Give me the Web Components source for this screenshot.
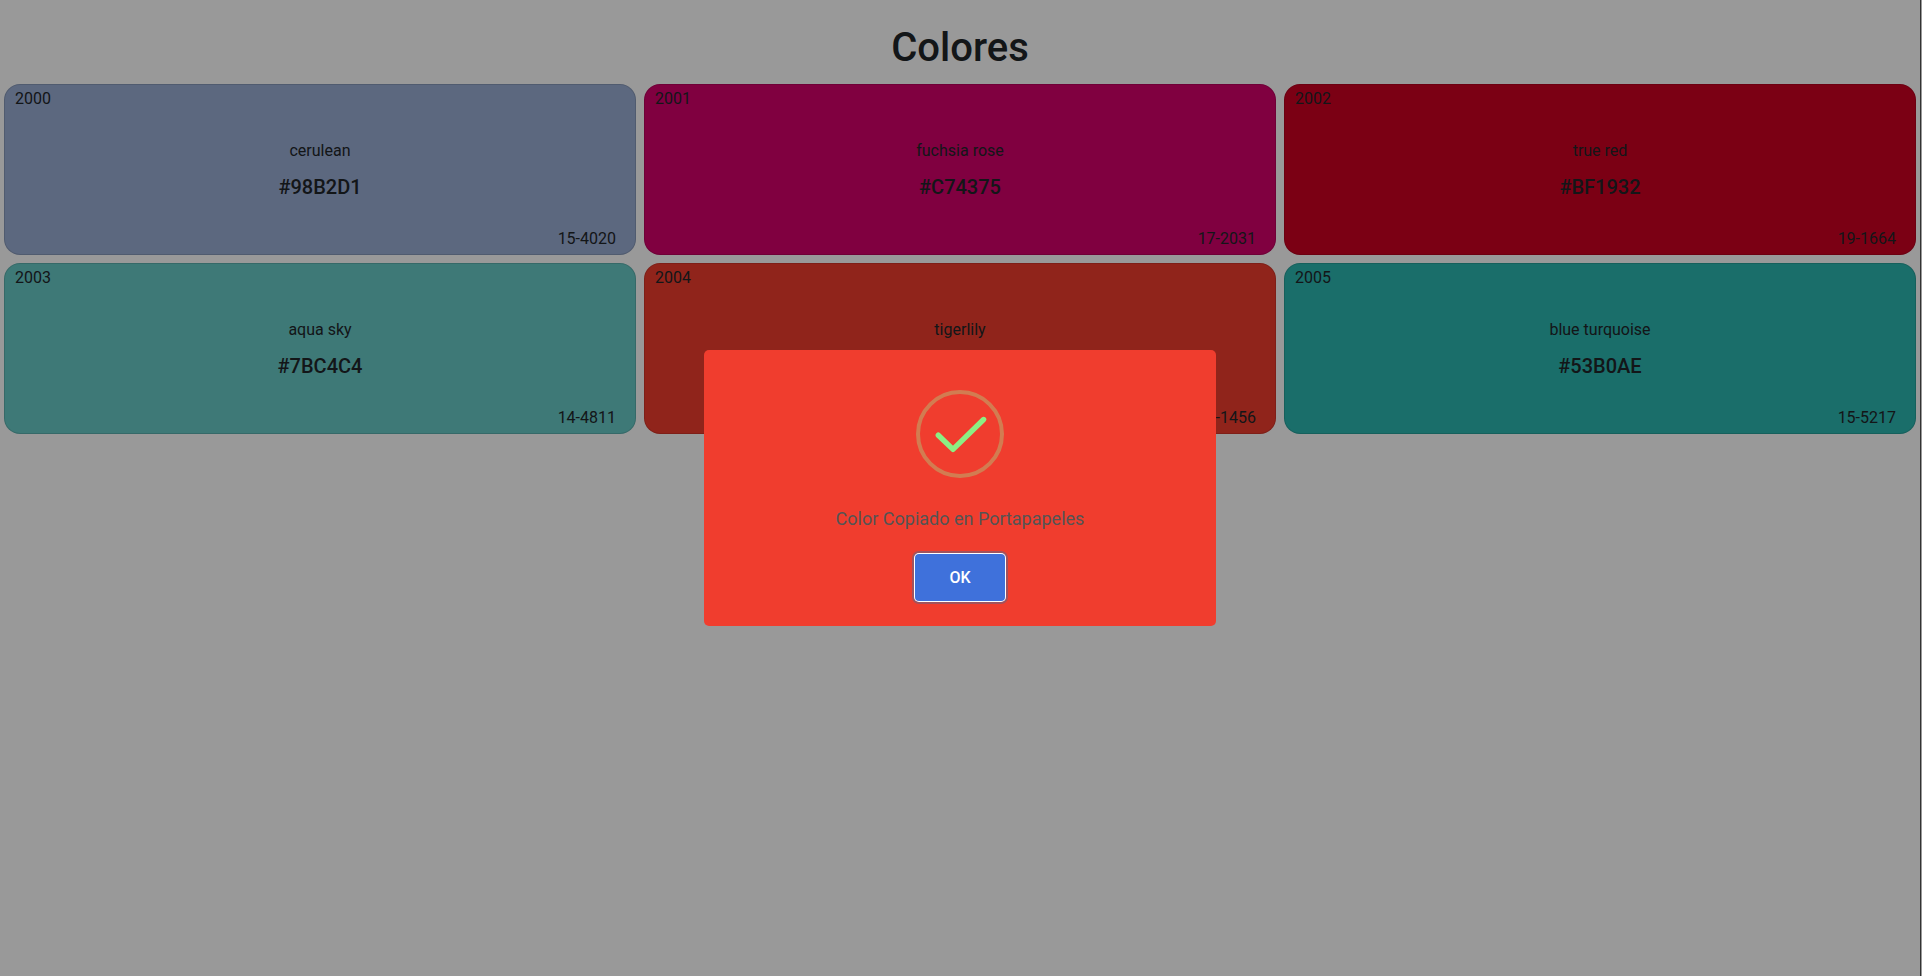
<!DOCTYPE html>
<html lang="es">
<head>
<meta charset="utf-8">
<meta name="viewport" content="width=device-width, initial-scale=1">
<title>Colores</title>
<style>
html, body { margin: 0; min-height: 100%; }
body { background: #fff; color: #212529; font: 16px/24px Roboto, sans-serif; }
</style>
</head>
<body>
<colores-app></colores-app>
<script>
class ColorCard extends HTMLElement {
  constructor() {
    super();
    this.attachShadow({ mode: 'open' }).innerHTML = `
      <style>
        :host { display: flex; flex-direction: column; justify-content: space-between; box-sizing: border-box;
          min-height: 171px; padding: 2px 19px 3px 10px; border: 1px solid rgba(0,0,0,.125);
          border-radius: 16px; cursor: pointer; }
        .year { align-self: flex-start; }
        .code { align-self: flex-end; }
        .center { text-align: center; margin-right: -9px; }
        p { margin: 0 0 12px; }
        h2 { margin: 0; font-size: 20px; line-height: 24px; font-weight: 500; }
      </style>
      <span class="year"><slot name="year"></slot></span>
      <div class="center"><p><slot name="name"></slot></p><h2><slot></slot></h2></div>
      <span class="code"><slot name="code"></slot></span>`;
  }
  connectedCallback() { this.style.backgroundColor = this.getAttribute('color'); }
}
customElements.define('color-card', ColorCard);

class CopyAlert extends HTMLElement {
  constructor() {
    super();
    this.attachShadow({ mode: 'open' }).innerHTML = `
      <style>
        :host { position: fixed; inset: 0 2px 0 0; display: flex; align-items: center; justify-content: center;
          background: rgba(0,0,0,.4); }
        .box { box-sizing: border-box; width: 512px; max-width: 90%; display: flex; flex-direction: column;
          align-items: center; padding: 40px 20px 25px; border-radius: 5px; background: #f03d2e; }
        svg { display: block; width: 88px; height: 88px; }
        p { margin: 27px 0 21px; font-size: 18px; line-height: 28px; color: #545454; }
        button { box-sizing: border-box; min-width: 90px; height: 47px; padding: 0 32px; border: 0;
          border-radius: 4px; background: #3f71db; color: #fff; font: 500 16px/24px Roboto, sans-serif; outline: 0;
          box-shadow: 0 0 0 1px #fff, 0 0 0 3px rgba(43,114,165,.4); cursor: pointer; }
      </style>
      <div class="box" role="dialog" aria-modal="true" aria-labelledby="message">
        <svg viewBox="0 0 88 88" fill="none" aria-hidden="true">
          <circle cx="44" cy="44" r="42" stroke="#a5dc86" stroke-opacity=".4" stroke-width="4"/>
          <path d="M22.300 45.200L37 59.400L67.600 29.500" stroke="#8bef83" stroke-width="5.400" stroke-linecap="round" stroke-linejoin="round"/>
        </svg>
        <p id="message"><slot></slot></p>
        <button type="button">OK</button>
      </div>`;
    this.shadowRoot.querySelector('button').addEventListener('click', () => this.remove());
  }
}
customElements.define('copy-alert', CopyAlert);

class ColoresApp extends HTMLElement {
  constructor() {
    super();
    const colors = [
      ['2000', 'cerulean', '#98B2D1', '15-4020', '#9aaed4'],
      ['2001', 'fuchsia rose', '#C74375', '17-2031', '#d5006b'],
      ['2002', 'true red', '#BF1932', '19-1664', '#ce0022'],
      ['2003', 'aqua sky', '#7BC4C4', '14-4811', '#68cac7'],
      ['2004', 'tigerlily', '#E2583E', '17-1456', '#f03d2e'],
      ['2005', 'blue turquoise', '#53B0AE', '15-5217', '#2cb7b1']
    ];
    this.attachShadow({ mode: 'open' }).innerHTML = `
      <style>
        :host { display: block; box-sizing: border-box; min-height: 100vh;
          border-right: 1px solid #999; }
        .page { box-sizing: border-box; min-height: 100vh; border-right: 1px solid #333; }
        h1 { margin: 0; padding: 24px 0 12px; font-size: 40px; line-height: 48px; font-weight: 500; text-align: center; }
        main { display: grid; grid-template-columns: repeat(3, minmax(0, 1fr)); gap: 8px; padding: 0 4px; }
      </style>
      <div class="page">
        <h1>Colores</h1>
        <main>${colors.map(([year, name, hex, code, color]) => `
          <color-card color="${color}"><span slot="year">${year}</span><span slot="name">${name}</span>${hex}<span slot="code">${code}</span></color-card>`).join('')}
        </main>
      </div>
      <copy-alert>Color Copiado en Portapapeles</copy-alert>`;
  }
}
customElements.define('colores-app', ColoresApp);
</script>
</body>
</html>
